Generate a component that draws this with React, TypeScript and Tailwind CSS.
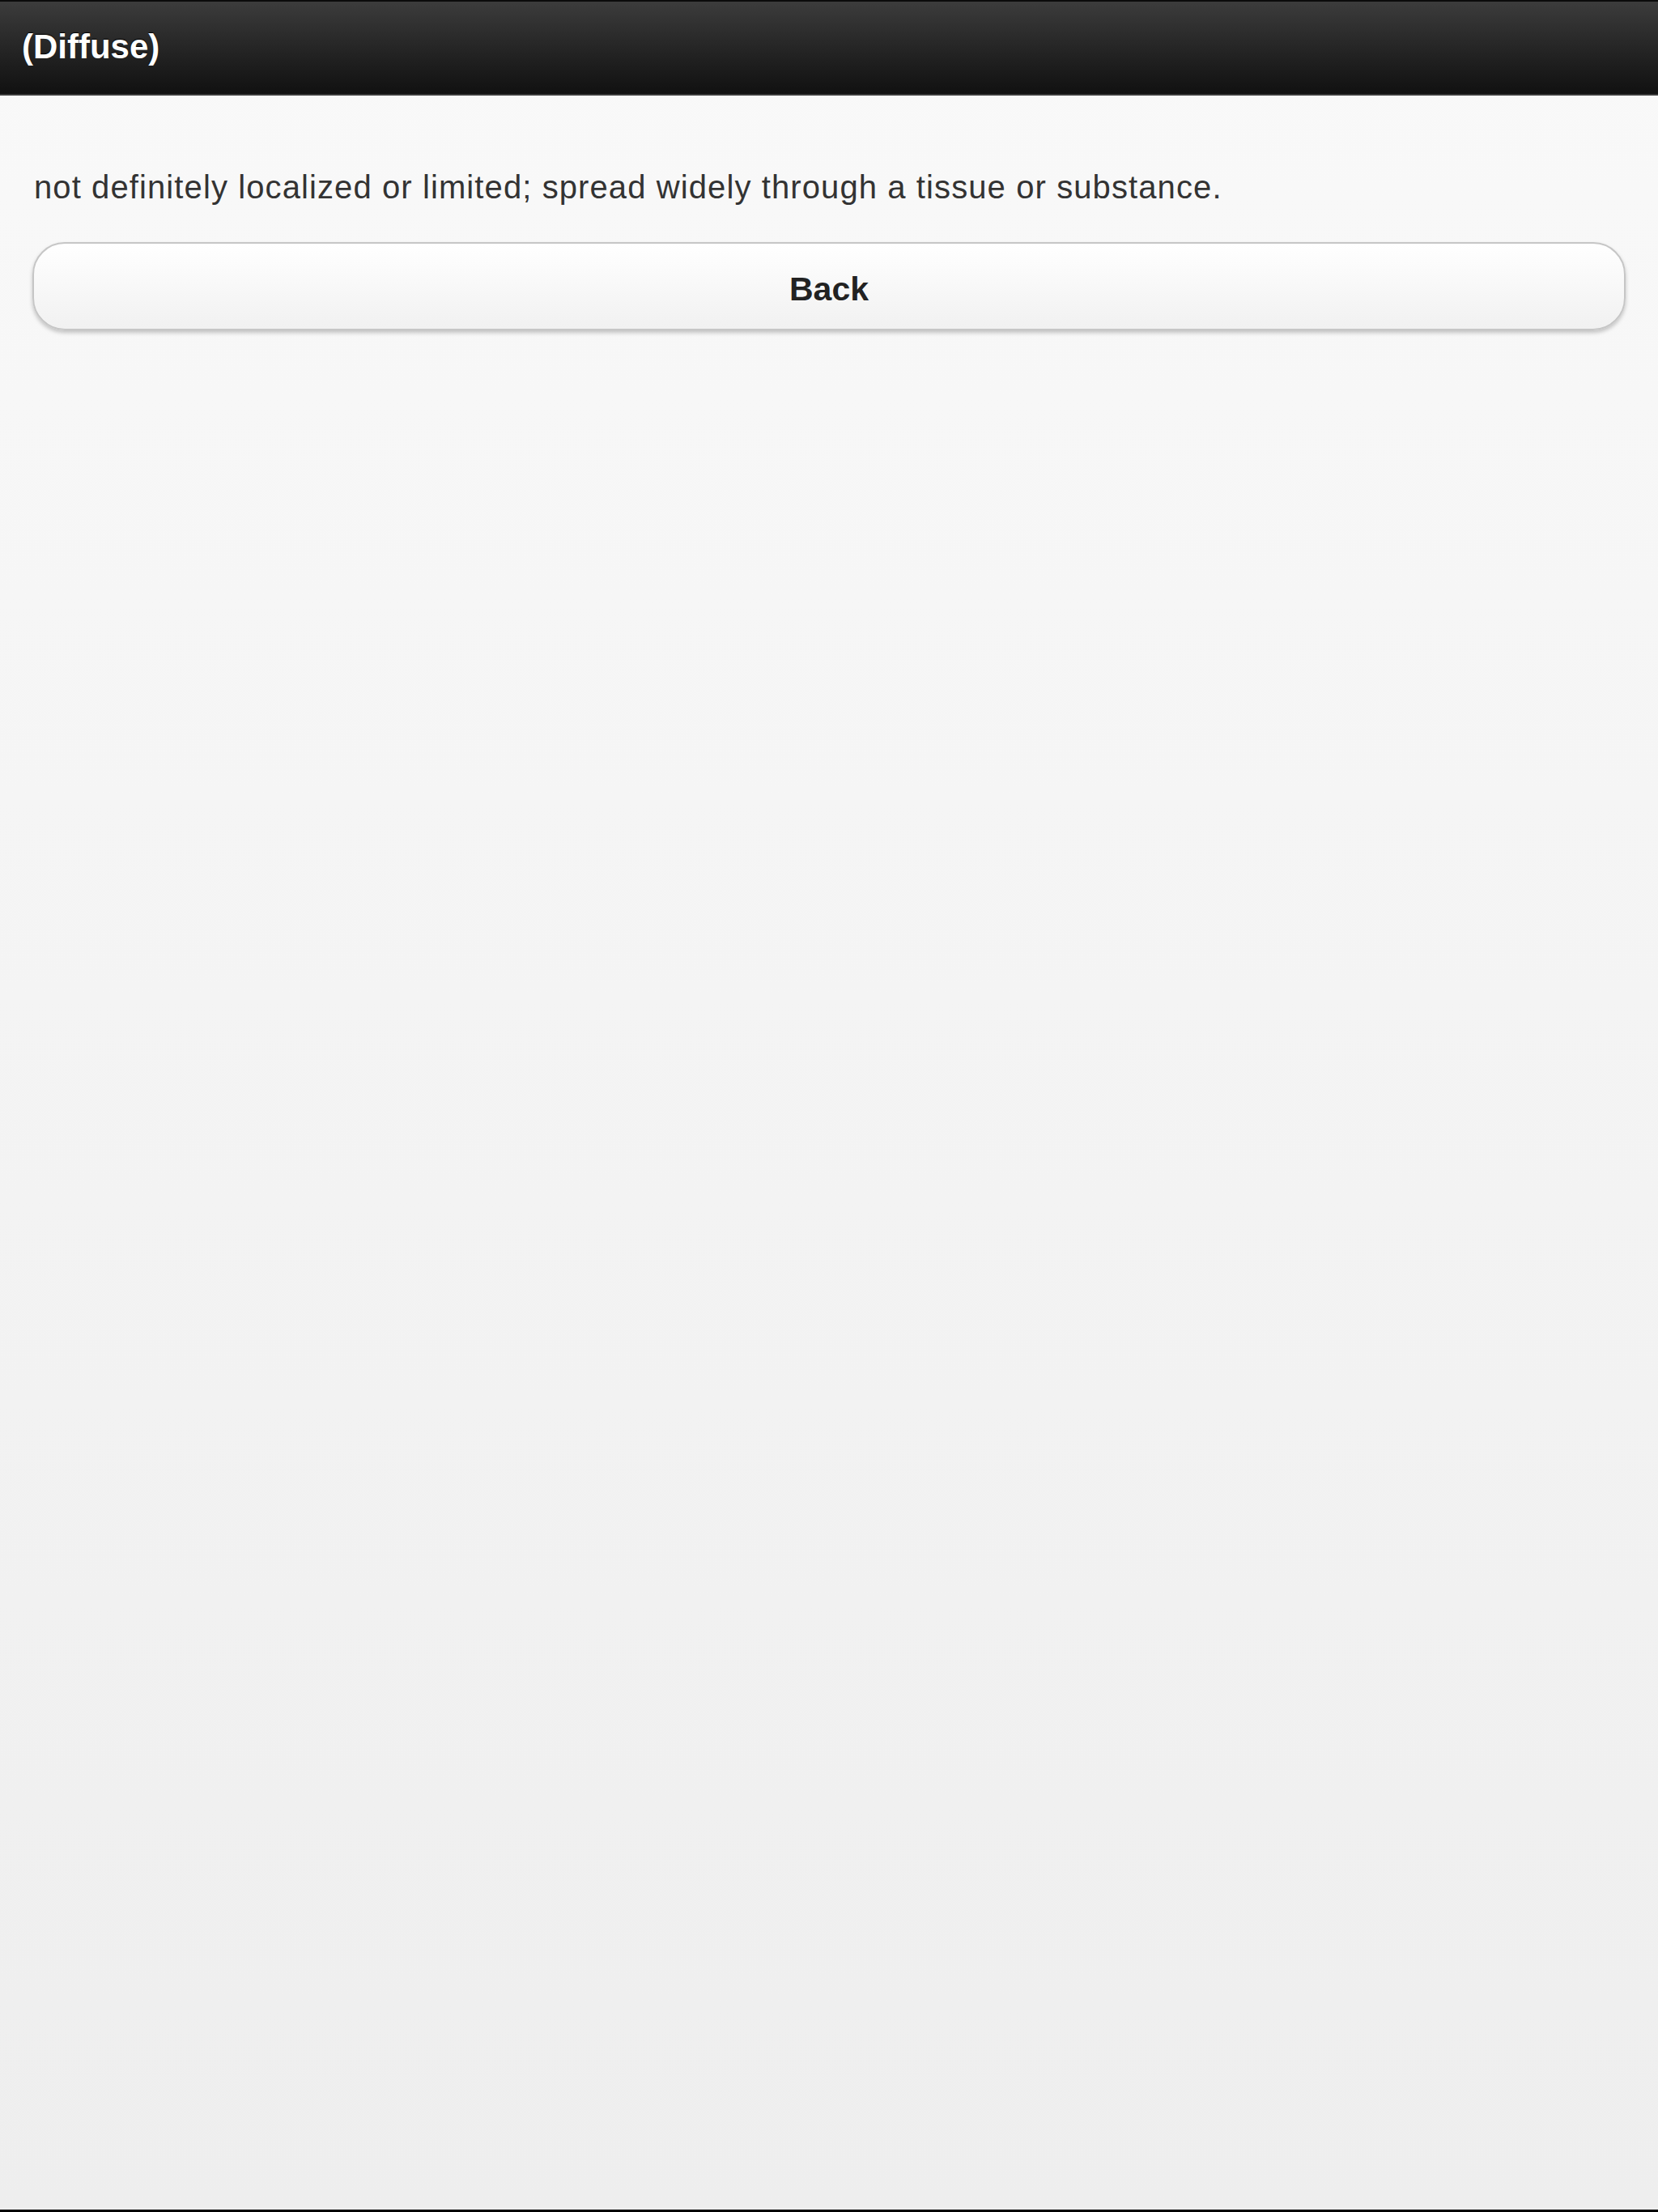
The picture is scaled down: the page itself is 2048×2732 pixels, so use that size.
import React from "react";

export default function App() {
  return (
    <div className="min-h-screen flex flex-col bg-gradient-to-b from-[#f9f9f9] to-[#eeeeee] font-['Liberation_Sans',Arial,sans-serif] border-b-[3px] border-black">
      <header className="h-[118px] flex items-center px-[27px] bg-gradient-to-b from-[#3c3c3c] to-[#111111] border-t-[2px] border-t-[#0a0a0a] border-b-[2px] border-b-[#3a3a3a]">
        <h1 className="text-white font-bold text-[42px] leading-none [text-shadow:0_-1px_1px_#000] pb-[2px]">
          (Diffuse)
        </h1>
      </header>
      <main className="px-[40px] pt-[85px]">
        <p className="text-[#333333] text-[40px] tracking-[1.1px] leading-[56px] mb-[40px] pl-[2px]">
          not definitely localized or limited; spread widely through a tissue or substance.
        </p>
        <button className="w-full h-[109px] pt-[8px] rounded-[40px] border-[2px] border-[#c6c6c6] bg-gradient-to-b from-[#ffffff] to-[#f1f1f1] shadow-[0_3px_5px_rgba(0,0,0,0.22)] text-[#222222] font-bold text-[41px] leading-none [text-shadow:0_1px_0_#fff]">
          Back
        </button>
      </main>
    </div>
  );
}
